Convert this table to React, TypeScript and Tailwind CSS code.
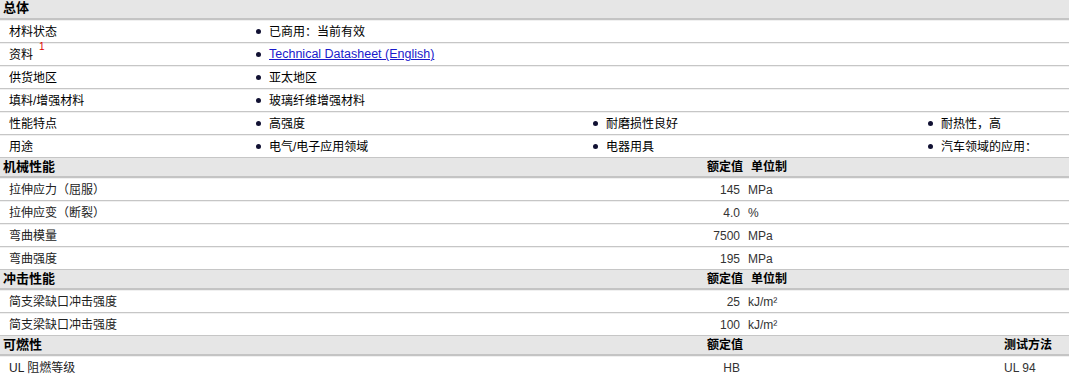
import React from 'react';

const font = { fontFamily: '"Liberation Sans", "Noto Sans CJK SC", sans-serif' };

type GeneralRow = { label: string; sup?: string; values: { text: string; link?: boolean }[] };
type PropRow = { label: string; value: string; unit?: string; method?: string };

const general: GeneralRow[] = [
    { label: '材料状态', values: [{ text: '已商用：当前有效' }] },
    { label: '资料', sup: '1', values: [{ text: 'Technical Datasheet (English)', link: true }] },
    { label: '供货地区', values: [{ text: '亚太地区' }] },
    { label: '填料/增强材料', values: [{ text: '玻璃纤维增强材料' }] },
    { label: '性能特点', values: [{ text: '高强度' }, { text: '耐磨损性良好' }, { text: '耐热性，高' }] },
    { label: '用途', values: [{ text: '电气/电子应用领域' }, { text: '电器用具' }, { text: '汽车领域的应用：' }] },
];

const mechanical: PropRow[] = [
    { label: '拉伸应力（屈服）', value: '145', unit: 'MPa' },
    { label: '拉伸应变（断裂）', value: '4.0', unit: '%' },
    { label: '弯曲模量', value: '7500', unit: 'MPa' },
    { label: '弯曲强度', value: '195', unit: 'MPa' },
];

const impact: PropRow[] = [
    { label: '简支梁缺口冲击强度', value: '25', unit: 'kJ/m²' },
    { label: '简支梁缺口冲击强度', value: '100', unit: 'kJ/m²' },
];

const flammability: PropRow[] = [{ label: 'UL 阻燃等级', value: 'HB', method: 'UL 94' }];

const SectionHeader: React.FC<{ title: string; value?: boolean; unit?: boolean; method?: boolean; className?: string }> = ({
    title,
    value,
    unit,
    method,
    className = ''
}) => (
    <div className={`flex items-center h-[20px] bg-[#e6e6e6] border-b-2 border-[#c4c4c4] font-bold text-black ${className}`}>
        <div className="w-[686px] pl-[3px] text-[13px]">{title}</div>
        <div className="w-[57px] text-right text-[12px]">{value ? '额定值' : ''}</div>
        <div className="w-[258px] pl-[8px] text-[12px]">{unit ? '单位制' : ''}</div>
        <div className="flex-1 pl-[3px] text-[12px]">{method ? '测试方法' : ''}</div>
    </div>
);

const Bullet: React.FC = () => <span className="inline-block w-[5px] h-[5px] rounded-full bg-[#111133] mr-[8px] shrink-0" />;

const RowShell: React.FC<{ children: React.ReactNode }> = ({ children }) => (
    <div className="h-[23px] border-b border-[#c6c6c6]">
        <div className="h-full border-t border-[#f0f0f0] flex items-center text-[12px]">{children}</div>
    </div>
);

export default function App() {
    return (
        <div className="w-[1069px] h-[375px] overflow-hidden bg-white" style={font}>
            <div className="-mt-[3px]">
                <SectionHeader title="总体" className="h-[23px] pt-[1px]" />
                {general.map((row, i) => (
                    <RowShell key={i}>
                        <div className="w-[248px] pl-[9px] text-black flex items-start">
                            {row.label}
                            {row.sup && <span className="text-[10px] leading-none text-[#dd0000] ml-[6px] -mt-[4px]">{row.sup}</span>}
                        </div>
                        {[0, 1, 2].map((c) => {
                            const v = row.values[c];
                            return (
                                <div key={c} className={`${c === 0 ? 'w-[337px]' : c === 1 ? 'w-[335px]' : 'flex-1'} pl-[8px] flex items-center`}>
                                    {v && <Bullet />}
                                    {v &&
                                        (v.link ? (
                                            <a href="#" className="text-[#1a1acc] underline text-[12.5px]">
                                                {v.text}
                                            </a>
                                        ) : (
                                            <span className="text-black">{v.text}</span>
                                        ))}
                                </div>
                            );
                        })}
                    </RowShell>
                ))}

                <SectionHeader title="机械性能" value unit />
                {mechanical.map((row, i) => (
                    <PropLine key={i} row={row} />
                ))}

                <SectionHeader title="冲击性能" value unit />
                {impact.map((row, i) => (
                    <PropLine key={i} row={row} />
                ))}

                <SectionHeader title="可燃性" value method />
                {flammability.map((row, i) => (
                    <PropLine key={i} row={row} />
                ))}
            </div>
        </div>
    );
}

const PropLine: React.FC<{ row: PropRow }> = ({ row }) => (
    <RowShell>
        <div className="w-[686px] pl-[9px] text-[#222]">{row.label}</div>
        <div className="w-[57px] text-right pr-[3px] text-[#333]">{row.value}</div>
        <div className="w-[258px] pl-[5px] text-[#333]">{row.unit ?? ''}</div>
        <div className="flex-1 pl-[3px] text-[#333]">{row.method ?? ''}</div>
    </RowShell>
);
